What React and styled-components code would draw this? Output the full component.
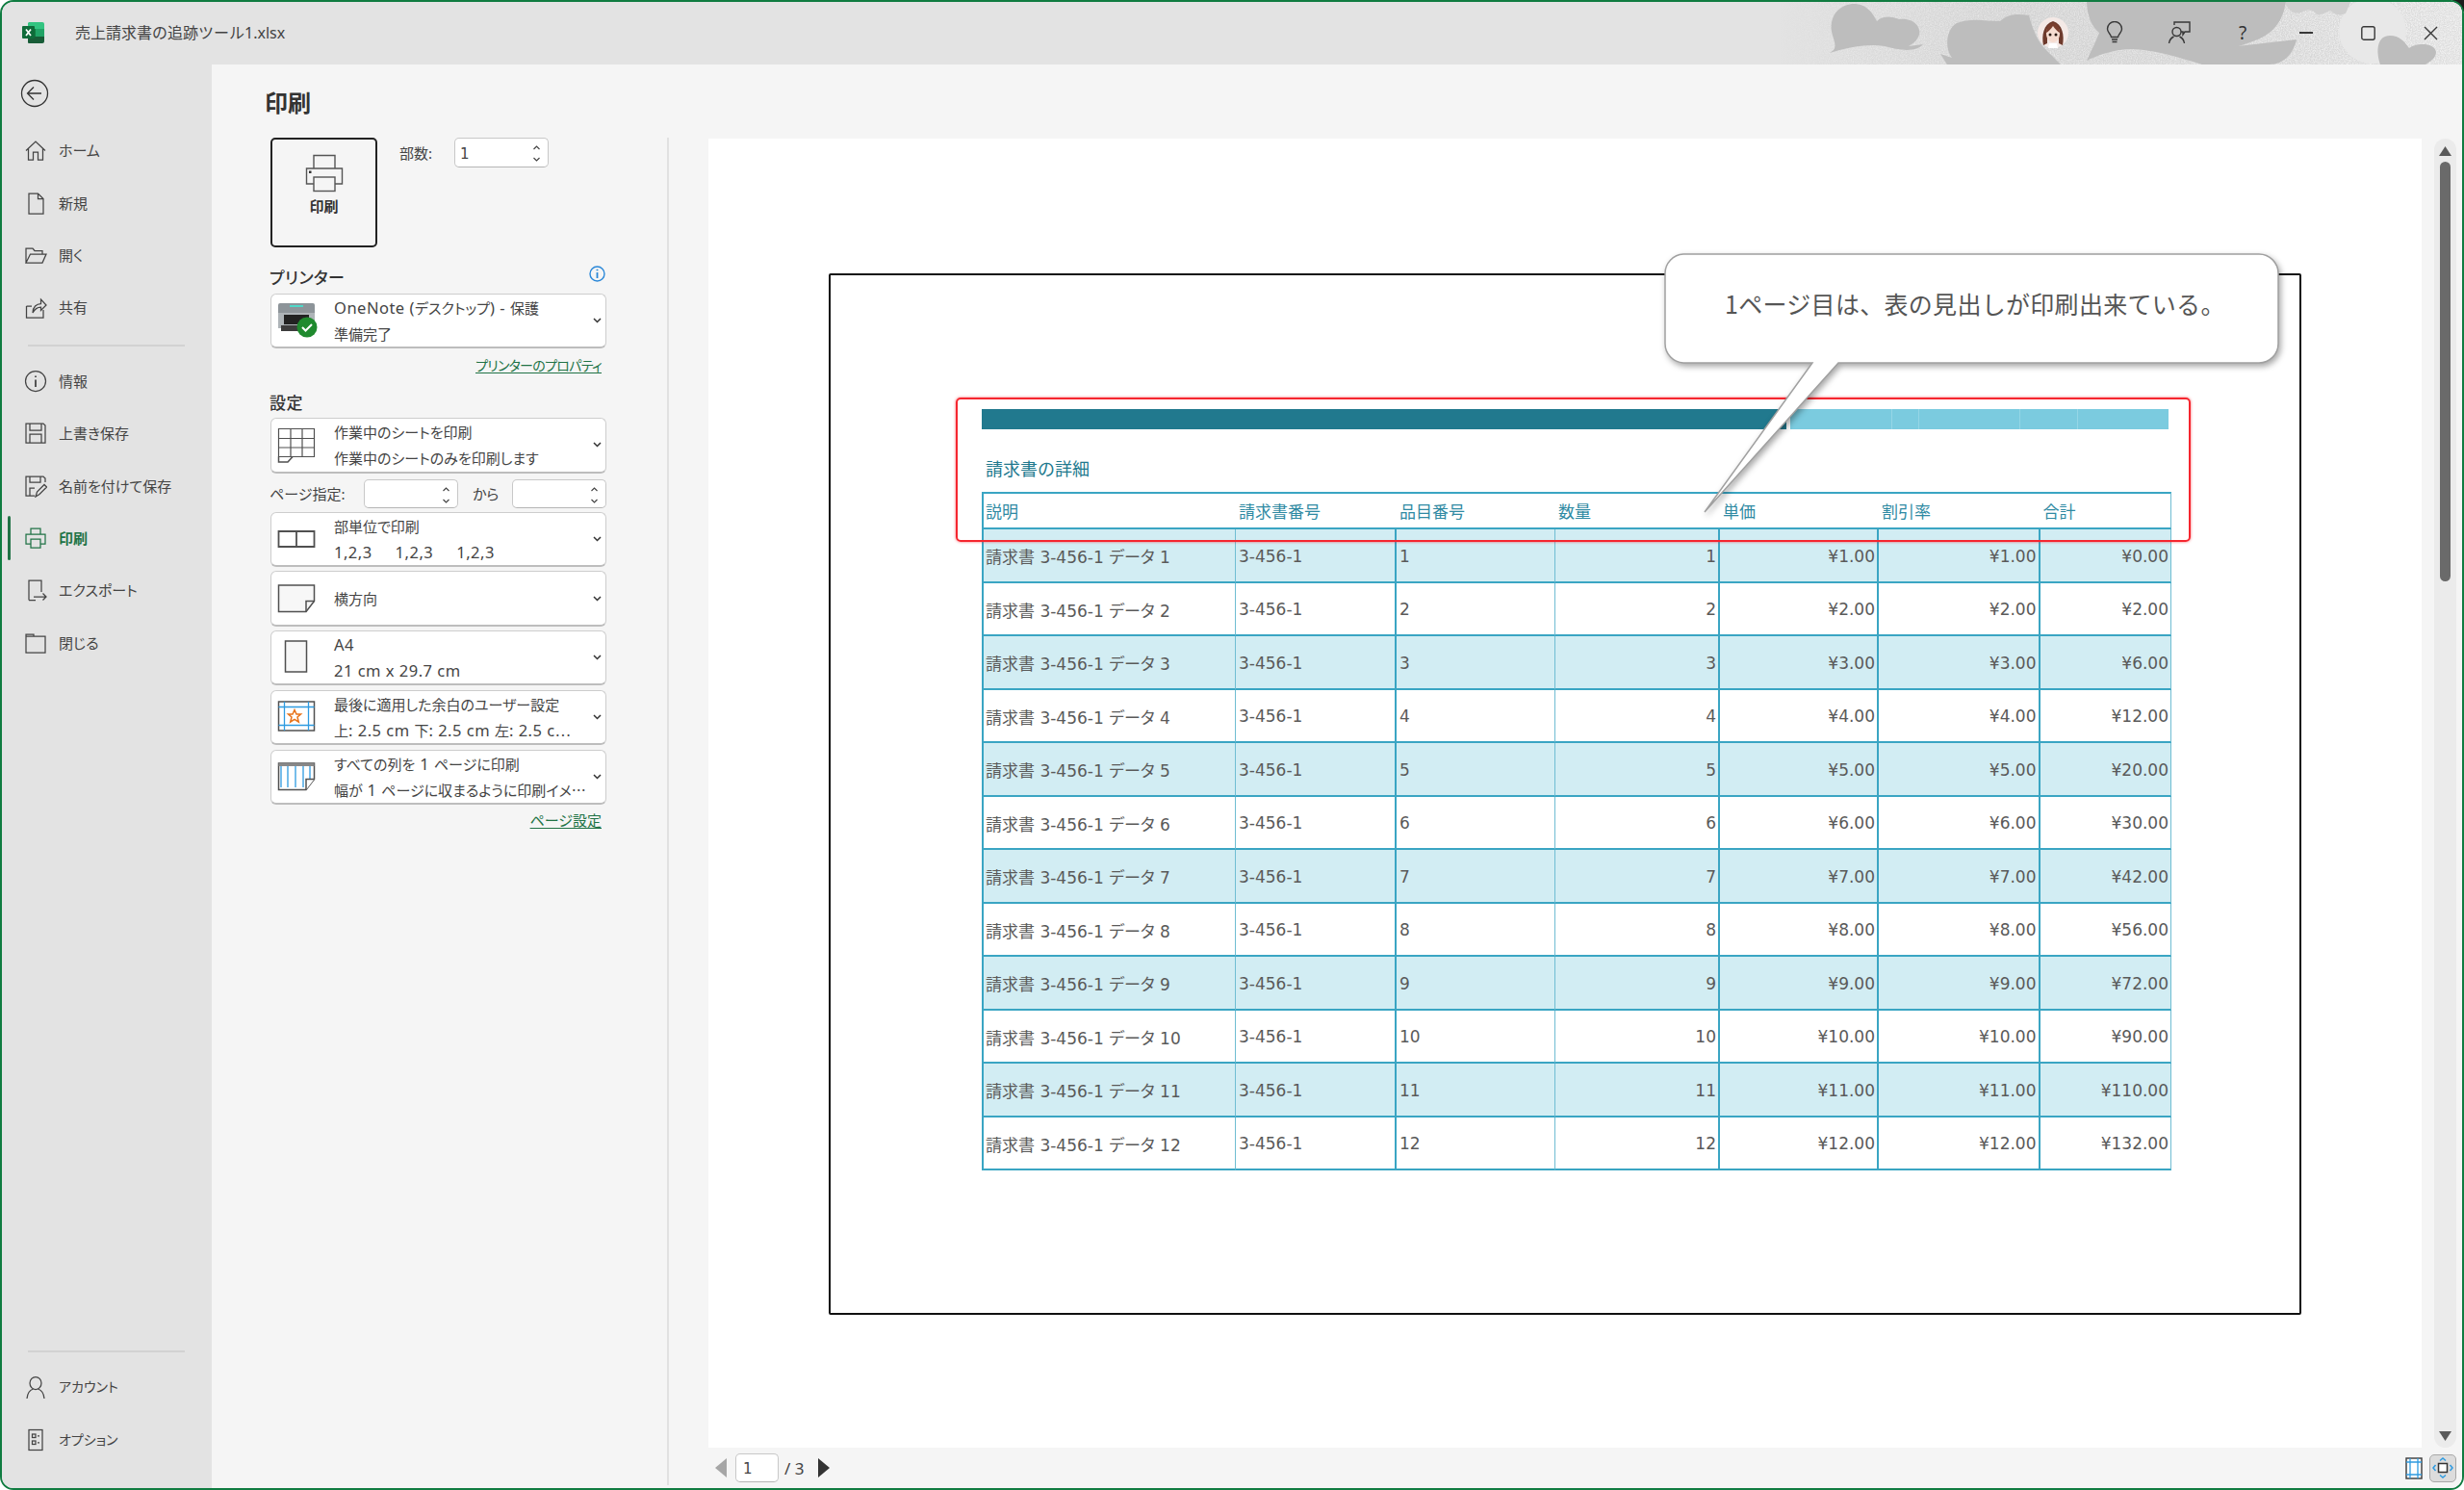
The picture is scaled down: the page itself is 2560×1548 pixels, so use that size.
import React from "react";
import styled, { createGlobalStyle } from "styled-components";

const Global = createGlobalStyle`
  html, body { margin: 0; padding: 0; background: #fff; }
  body { width: 2560px; height: 1548px; overflow: hidden; font-family: "Noto Sans", "Noto Sans CJK JP", sans-serif; }
  * { box-sizing: border-box; }
`;

const Screen = styled.div`
  position: relative; width: 2560px; height: 1548px;
  &::before { content: ""; position: absolute; top: 0; right: 0; width: 12px; height: 12px; background: #1c1c1c; }
`;
const Window = styled.div`
  position: relative; width: 100%; height: 100%; display: flex; flex-direction: column;
  border: 2px solid #107c41; border-radius: 14px; overflow: hidden; background: #f5f5f5;
  font-feature-settings: "palt"; color: #444;
`;
const TitleBar = styled.header`
  position: relative; flex: 0 0 65px; display: flex; align-items: center; background: #e3e3e3;
`;
const TitleArt = styled.svg`
  position: absolute; right: 0; top: 0; width: 708px; height: 65px;
`;
const ExcelLogo = styled.svg`
  position: relative; width: 24px; height: 24px; margin-left: 21px; margin-top: -2px; flex: none;
`;
const FileName = styled.div`
  position: relative; margin-left: 31px; margin-top: -2px; font-size: 16px; line-height: 24px; color: #444; font-feature-settings: normal;
`;
const TitleTools = styled.div`
  position: relative; margin-left: auto; margin-top: -1px; height: 34px; display: flex; align-items: center;
`;
const ToolSlot = styled.div`
  width: ${(p) => p.$w}px; display: flex; align-items: center; justify-content: center; color: #333; font-size: 19px; line-height: 24px;
`;
const ToolIcon = styled.svg`
  display: block; fill: none; stroke: #383838; stroke-width: 1.4;
`;
const AvatarIcon = styled.svg`
  display: block; width: 32px; height: 32px;
`;

const Body = styled.div`
  flex: 1; min-height: 0; display: flex;
`;
const Sidebar = styled.nav`
  flex: 0 0 218px; display: flex; flex-direction: column; background: #e3e3e3; padding-bottom: 23px;
`;
const BackButton = styled.svg`
  width: 30px; height: 30px; margin: 15px 0 17px 19px; flex: none; fill: none; stroke: #333; stroke-width: 1.3;
`;
const NavGroup = styled.div`
  display: flex; flex-direction: column;
`;
const NavItem = styled.div`
  position: relative; height: 54.4px; display: flex; align-items: center; gap: 12px; padding-left: 23px;
  font-size: 15px; color: ${(p) => (p.$active ? "#217346" : "#444")}; font-weight: ${(p) => (p.$active ? 700 : 400)};
  ${(p) => p.$active && `&::before { content: ""; position: absolute; left: 6px; top: 4px; width: 3px; height: 46px; border-radius: 2px; background: #217346; }`}
`;
const NavIcon = styled.svg`
  width: 24px; height: 24px; flex: none; fill: none; stroke: currentColor; stroke-width: 1.25;
`;
const NavLabel = styled.span`
  line-height: 22px;
`;
const NavSmallLabel = styled.span`
  font-size: 14px; line-height: 22px;
`;
const NavRule = styled.div`
  height: 2px; margin: 11px 28px 9px 27px; background: #d2d2d2;
`;
const NavFoot = styled.div`
  margin-top: auto; display: flex; flex-direction: column;
`;

const Main = styled.main`
  flex: 1; min-width: 0; display: flex; flex-direction: column; background: #f5f5f5;
`;
const Heading = styled.h1`
  margin: 0; flex: 0 0 76px; padding: 20px 0 0 55px; font-size: 24px; line-height: 40px; font-weight: 700; color: #333;
`;
const Columns = styled.div`
  flex: 1; min-height: 0; display: flex;
`;
const Settings = styled.section`
  flex: 0 0 475px; margin-bottom: 3px; padding-left: 60px; border-right: 2px solid #e1e1e1;
`;
const PrintRow = styled.div`
  display: flex; align-items: flex-start; margin-left: 1px;
`;
const PrintButton = styled.div`
  width: 111px; height: 114px; flex: none; border: 2px solid #222; border-radius: 5px; display: flex; flex-direction: column; align-items: center; padding-top: 15px;
  font-size: 15px; font-weight: 700; color: #333; line-height: 22px;
`;
const PrinterGlyph = styled.svg`
  width: 40px; height: 40px; margin-bottom: 3px; fill: none; stroke: #555; stroke-width: 1.4;
`;
const CopiesLabel = styled.div`
  margin-left: 23px; width: 57px; flex: none; font-size: 15px; line-height: 32px; color: #444;
`;
const SpinBox = styled.div`
  position: relative; flex: none; width: ${(p) => p.$w}px; height: ${(p) => p.$h || 31}px; background: #fff; border: 1px solid #c8c8c8; border-bottom-color: #b5b5b5; border-radius: 5px;
  display: flex; align-items: center; padding: 2px 0 0 5px; font-size: 15px; color: #444; font-family: "DejaVu Sans", sans-serif;
`;
const SpinArrows = styled.svg`
  position: absolute; right: 7px; top: 7px; width: 9px; height: 17px; fill: none; stroke: #444; stroke-width: 1.2;
`;
const SectionHead = styled.div`
  width: 349px; height: 24px; margin: ${(p) => p.$mt}px 0 ${(p) => p.$mb}px; display: flex; justify-content: space-between; align-items: center;
  font-size: 17px; font-weight: 500; line-height: 24px; letter-spacing: .4px; color: #333;
`;
const InfoIcon = styled.svg`
  width: 17px; height: 17px; margin-top: -9px; fill: none; stroke: #2b88d8; stroke-width: 1.4;
`;
const LinkRow = styled.div`
  width: 345px; height: 20px; margin-top: ${(p) => p.$mt}px; display: flex; justify-content: flex-end; line-height: 20px;
  font-size: ${(p) => (p.$tight ? 14 : 15)}px; letter-spacing: ${(p) => (p.$tight ? "-.7px" : "0")};
  color: #217346; text-decoration: underline; text-underline-offset: 2px;
`;
const Combo = styled.div`
  width: 349px; height: 57.3px; margin-top: ${(p) => p.$mt ?? 4.5}px; margin-left: 1px; background: #fff; border: 1px solid #cdcdcd; border-bottom: 2px solid #bdbdbd; border-radius: 6px;
  display: flex; align-items: center; padding-left: 6px;
`;
const ComboIcon = styled.svg`
  width: 42px; height: 40px; flex: none; fill: none; stroke: #505050; stroke-width: 1.5;
`;
const ComboText = styled.div`
  width: 263px; margin-left: 17px; font-size: 15px; line-height: 27px; color: #444; flex: none; font-family: "Noto Sans CJK JP", sans-serif;
`;
const ComboLine = styled.div`
  height: 27px; white-space: pre;
`;
const LatinRun = styled.span`
  font-size: 16.5px; letter-spacing: .5px; font-family: "Noto Sans", sans-serif; font-feature-settings: normal;
`;
const Chevron = styled.svg`
  width: 9px; height: 6px; margin-left: 6px; flex: none; fill: none; stroke: #333; stroke-width: 1.5;
`;
const RangeRow = styled.div`
  width: 350px; height: 30px; margin: 6px 0 4px; display: flex; align-items: center; font-size: 15px; color: #444;
`;
const RangeLabel = styled.span`
  width: 98px; flex: none;
`;
const RangeFrom = styled.span`
  width: 56px; flex: none; padding-left: 15px;
`;

const Preview = styled.section`
  flex: 1; min-width: 0; padding: 1px 6px 0 41px; display: flex; flex-direction: column;
`;
const PreviewRow = styled.div`
  flex: 0 0 1360px; display: flex;
`;
const Sheet = styled.div`
  flex: 1; min-width: 0; background: #fff; padding: 140px 0 0 125px;
`;
const Paper = styled.div`
  position: relative; width: 1530px; height: 1082px; border: 2px solid #111; border-radius: 2px; padding: 139px 0 0 157px; background: #fff;
`;
const Band = styled.div`
  width: 1233px; height: 21px; display: flex;
`;
const BandPart = styled.div`
  width: ${(p) => p.$w}px; margin-right: ${(p) => p.$gap || 0}px; background: ${(p) => (p.$dark ? "#21798e" : "#7bcbdf")};
  border-left: ${(p) => (p.$sep ? "1px solid #95d6e6" : "0")};
`;
const SheetTitle = styled.div`
  margin: 29px 0 12px 4px; font-size: 18px; line-height: 24px; color: #21798e; font-feature-settings: normal; height: 24px;
`;
const Table = styled.table`
  width: 1236px; table-layout: fixed; border-collapse: separate; border-spacing: 0; font-family: "DejaVu Sans", "Noto Sans CJK JP", sans-serif; font-size: 17px;
`;
const Col = styled.col`
  width: ${(p) => p.$w}px;
`;
const Th = styled.th`
  height: 39px; padding: 0 0 0 3px; text-align: left; font-weight: 400; color: #2f8aa3; border-top: 2px solid #3aa5c3; border-bottom: 2px solid #3aa5c3;
  font-family: "Noto Sans CJK JP", sans-serif;
  &:first-child { border-left: 2px solid #3aa5c3; padding-left: 2px; }
  &:last-child { border-right: 1px solid #6fbdd2; }
`;
const Tr = styled.tr`
  background: ${(p) => (p.$alt ? "#d2edf3" : "#fff")};
`;
const Td = styled.td`
  height: 55.5px; padding: 2px ${(p) => (p.$right ? 2 : 0)}px 0 ${(p) => (p.$right ? 0 : 3)}px; text-align: ${(p) => (p.$right ? "right" : "left")}; color: #5a5a5a; white-space: nowrap;
  border-bottom: 2px solid #3aa5c3; border-right: ${(p) => p.$line || "2px solid #3aa5c3"};
  &:first-child { border-left: 2px solid #3aa5c3; padding-left: 2px; }
`;
const RedFrame = styled.div`
  position: absolute; left: 130px; top: 127px; width: 1283px; height: 150px; border: 2px solid #f5262f; border-radius: 5px; box-shadow: 0 0 3px rgba(245, 38, 47, .7);
`;
const CalloutShape = styled.svg`
  position: absolute; left: 866px; top: -23px; width: 642px; height: 274px; overflow: visible; filter: drop-shadow(2px 3px 3px rgba(0, 0, 0, .35));
`;
const CalloutText = styled.div`
  position: absolute; left: 929px; top: 11px; font-size: 25px; line-height: 36px; letter-spacing: .3px; color: #555; white-space: nowrap; font-feature-settings: normal; font-family: "Noto Sans CJK JP", sans-serif;
`;

const ScrollTrack = styled.div`
  flex: 0 0 23px; margin-left: 13px; position: relative; background: #ebebeb; border-radius: 12px;
`;
const ScrollArrow = styled.svg`
  position: absolute; left: 5px; ${(p) => (p.$down ? "bottom: 7px;" : "top: 8px;")} width: 13px; height: 10px; fill: #5a5a5a;
`;
const ScrollThumb = styled.div`
  position: absolute; left: 6px; top: 24px; width: 11px; height: 436px; border-radius: 6px; background: #6a6a6a;
`;
const Footer = styled.footer`
  flex: 1; display: flex; align-items: center; padding-left: 7px;
`;
const PageArrow = styled.svg`
  width: 12px; height: 20px; flex: none; fill: ${(p) => (p.$dim ? "#a6a6a6" : "#333")};
`;
const PageInput = styled.div`
  width: 45px; height: 30px; margin: 0 6px 0 9px; background: #fff; border: 1px solid #c8c8c8; border-bottom-color: #b5b5b5; border-radius: 5px; padding-left: 7px; font-size: 15px; line-height: 30px; font-family: "DejaVu Sans", sans-serif; color: #444;
`;
const PageTotal = styled.span`
  width: 35px; font-size: 17px; color: #444;
`;
const FooterTools = styled.div`
  margin-left: auto; display: flex; align-items: center; gap: 7px;
`;
const FitIcon = styled.svg`
  width: 18px; height: 23px; display: block;
`;
const ZoomButton = styled.div`
  width: 28px; height: 29px; border: 1px solid #a8a8a8; border-radius: 5px; background: #dcdcdc; display: flex; align-items: center; justify-content: center;
`;
const ZoomIcon = styled.svg`
  width: 22px; height: 22px; display: block;
`;

const Icons = {
  home: <path d="M2 12.5 12 3l10 9.500M4.500 10.500V22h5v-8h5v8h5V10.500" />,
  file: <path d="M5 2h9.500L20 7.500V23H5zM14.500 2v5.500H20" />,
  open: <path d="M2 20V5h7l2 2.500h8V11M2 20h17l4-9H6.500z" />,
  share: <path d="M2.500 11v12H20v-8M2.500 11H8M9 18c0-6 4-9.500 8.500-9.500V4l5.500 6-5.500 5.500V12c-4 0-6.500 2-8.500 6z" />,
  info: <><circle cx="12" cy="12" r="10.500" /><path d="M12 10.500V18" strokeWidth="1.800" /><path d="M12 6.500v1.600" strokeWidth="1.800" /></>,
  save: <path d="M2 2h18l2 2v18H2zM6 2v7h12V2M6 22v-9h12v9" />,
  saveAs: <><path d="M11 22H2V2h18l2 2v4M6 2v6h11V2M6 22v-8h5" /><path d="M12 23l1.500-5L21 10.500l2.500 2.500L16 20.500z" /></>,
  print: <path d="M7 8V2h10v6M7 18H2V8h20v10h-5M7 13h10v9H7z" />,
  export: <path d="M5 22.500V2h13v12M5 22.500h7M10 19h13M19.500 15.500 23 19l-3.500 3.500" />,
  close: <path d="M2 22V3h8v2h12v17zM2 5h8" />,
  account: <><ellipse cx="12" cy="8" rx="6" ry="6.500" /><path d="M3 24c.5-6 3.500-9 6.500-10M21 24c-.5-6-3.500-9-6.500-10" /></>,
  options: <><rect x="5" y="1.500" width="14" height="21" /><rect x="8.500" y="6" width="3.500" height="3.500" /><rect x="8.500" y="13" width="3.500" height="3.500" /><path d="M14 7.800h2M14 14.800h2" /></>,
};

const nav1 = [["home", "ホーム"], ["file", "新規"], ["open", "開く"], ["share", "共有"]];
const nav2 = [["info", "情報"], ["save", "上書き保存"], ["saveAs", "名前を付けて保存"], ["print", "印刷", true], ["export", "エクスポート"], ["close", "閉じる"]];

const ComboGlyphs = {
  printer: (
    <g stroke="none">
      <rect x="1" y="2" width="38" height="12" rx="2" fill="#8d9499" />
      <rect x="13" y="4" width="14" height="2" fill="#4fd8c8" />
      <rect x="1" y="12" width="38" height="16" fill="#aeb4b8" />
      <rect x="7" y="14" width="26" height="10" fill="#222" />
      <rect x="4" y="25" width="24" height="6" fill="#3c3c3c" />
      <circle cx="31" cy="27" r="10.500" fill="#1f8a2e" />
      <path d="M26 27l3.500 3.500L36 24" fill="none" stroke="#fff" strokeWidth="2" />
    </g>
  ),
  sheet: (
    <>
      <path d="M1.500 3.500h37v29h-37zM1.500 13.500h37M1.500 23h37M14 3.500V32.500M26 3.500V32.500" strokeWidth="1.200" />
      <path d="M1.500 32.500V38H11l5-5.500" strokeWidth="1.500" />
    </>
  ),
  collate: <path d="M1.500 12h37v16h-37zM20 12v16" strokeWidth="1.800" />,
  landscape: (
    <>
      <path d="M1.500 6h37v16.500L30 33.500H1.500z" fill="#f7f7f7" />
      <path d="M38.500 22.500H30v11" />
    </>
  ),
  a4: <rect x="8.500" y="3" width="22" height="32" fill="#f7f7f7" />,
  margins: (
    <>
      <rect x="1.500" y="4" width="37" height="30" fill="#fff" />
      <path d="M1.500 9.500h37M1.500 28.500h37M7.500 4v30M32.500 4v30" stroke="#2f9be0" strokeWidth="1.300" />
      <path d="M18 12.500l2 4.500h4.500l-3.500 3 1.300 5L18 22.300 13.700 25l1.300-5-3.500-3H16z" stroke="#e8731a" strokeWidth="1.500" />
    </>
  ),
  fit: (
    <>
      <path d="M1.500 6h37v16.500L30 33.500H1.500z" fill="#fff" />
      <path d="M1.500 6h37v3H1.500z" fill="#888" stroke="none" />
      <path d="M4 9v22M11 9v22M19 9v22M27 9v22M34 9v13" stroke="#2f9be0" strokeWidth="1.300" />
      <path d="M38.500 22.500H30v11" fill="#fff" />
    </>
  ),
};

const combosA = [
  { g: "sheet", l: ["作業中のシートを印刷", "作業中のシートのみを印刷します"] },
];
const combosB = [
  { g: "collate", l: ["部単位で印刷", "1,2,3     1,2,3     1,2,3"] },
  { g: "landscape", l: ["横方向"] },
  { g: "a4", l: ["A4", "21 cm x 29.7 cm"] },
  { g: "margins", l: ["最後に適用した余白のユーザー設定", "上: 2.5 cm 下: 2.5 cm 左: 2.5 c…"] },
  { g: "fit", l: ["すべての列を 1 ページに印刷", "幅が 1 ページに収まるように印刷イメ…"] },
];

const withLatin = (text) =>
  text.split(/([\u0020-\u007e]+)/).map((part, i) =>
    /[\u0021-\u007e]/.test(part) ? <LatinRun key={i}>{part}</LatinRun> : part
  );

const SettingCombo = ({ g, l, mt }) => (
  <Combo $mt={mt}>
    <ComboIcon viewBox="0 0 42 40">{ComboGlyphs[g]}</ComboIcon>
    <ComboText>
      {l.map((t) => (
        <ComboLine key={t}>{withLatin(t)}</ComboLine>
      ))}
    </ComboText>
    <Chevron viewBox="0 0 9 6"><path d="M1 1l3.500 3.500L8 1" /></Chevron>
  </Combo>
);

const Spin = () => (
  <SpinArrows viewBox="0 0 9 17"><path d="M1.500 4 4.500 1l3 3M1.500 13l3 3 3-3" /></SpinArrows>
);

const colW = [264, 167, 165, 171, 165, 167.500, 136.500];
const heads = ["説明", "請求書番号", "品目番号", "数量", "単価", "割引率", "合計"];
const rows = Array.from({ length: 12 }, (_, i) => i + 1);
const light = "1px solid #6fbdd2";
const money = (n) => `¥${n.toFixed(2)}`;

const TitleBackdrop = () => (
  <TitleArt viewBox="1852 2 708 65" aria-hidden="true">
    <defs>
      <linearGradient id="tb" x1="0" x2="1" y1="0" y2="0">
        <stop offset="0" stopColor="#e3e3e3" />
        <stop offset=".1" stopColor="#dcdcdc" />
        <stop offset=".35" stopColor="#d2d2d2" />
        <stop offset=".75" stopColor="#d6d6d6" />
        <stop offset="1" stopColor="#dedede" />
      </linearGradient>
      <linearGradient id="fade" x1="0" x2="1" y1="0" y2="0">
        <stop offset="0" stopColor="#000" />
        <stop offset=".1" stopColor="#777" />
        <stop offset=".6" stopColor="#aaa" />
        <stop offset="1" stopColor="#fff" />
      </linearGradient>
      <mask id="fm" maskUnits="userSpaceOnUse" x="1850" y="0" width="710" height="70"><rect x="1850" y="0" width="710" height="70" fill="url(#fade)" /></mask>
      <filter id="speck" x="0" y="0" width="100%" height="100%">
        <feTurbulence type="fractalNoise" baseFrequency="0.8" numOctaves="2" seed="4" />
        <feColorMatrix values="0 0 0 0 .93  0 0 0 0 .93  0 0 0 0 .93  1.800 0 0 0 -.55" />
      </filter>
    </defs>
    <rect x="1850" y="0" width="710" height="70" fill="url(#tb)" />
    <rect x="1850" y="0" width="710" height="70" filter="url(#speck)" mask="url(#fm)" />
    <ellipse cx="2467" cy="32" rx="35" ry="34" fill="#e8e8e8" />
    <path d="M2375 0h70l-6 14c-8 3-12 0-16-3-5 2-9 5-14 4-4-6-10-6-16-2-7 2-14-1-18-13z" fill="#cfcfcf" />
    <g fill="#bdbdbd">
      <path d="M1903 55c9-5 5-10 2-22-3-21 13-30 25-29 12 1 18 10 22 18 6-6 16-5 23-2 15-2 23 8 21 16-2 6-6 9-11 12l15-2c-8 9-25 6-40 2-20-3-40 2-57 7z" />
      <path d="M2018 56l12 4c-8-10-6-30 5-36 15-6 30-2 45-2 8-8 20-8 30-6 4 14 8 26 18 36l15 15H2025z" />
      <path d="M2170 0h207c-2 20-12 35-32 42-15 6-25 8-27 7l70-8c-3 14-13 26-28 26h-70c-20-6-50-16-75-16-20 1-35 7-45 12 6-13 10-21 13-29-8-6-13-19-13-34z" />
      <path d="M2475 67c-5-15-3-30 10-30 10 0 15 6 20 13 7-6 27-6 28 4 0 6-6 10-11 13z" />
    </g>
  </TitleArt>
);

export default function App() {
  return (
    <Screen>
      <Global />
      <Window>
        <TitleBar>
          <TitleBackdrop />
          <ExcelLogo viewBox="0 0 24 24">
            <path d="M7 1h14a2 2 0 0 1 2 2v5H6V2z" fill="#33c481" />
            <rect x="6" y="8" width="17" height="8" fill="#21a366" />
            <path d="M6 16h17v5a2 2 0 0 1-2 2H7a1 1 0 0 1-1-1z" fill="#185c37" />
            <rect x="6" y="8" width="8" height="8" fill="#107c41" />
            <rect x="0" y="5" width="13" height="13" rx="1" fill="#0f6b3a" />
            <path d="M4 8.500l5 6.500M9 8.500l-5 6.500" stroke="#fff" strokeWidth="1.700" fill="none" />
          </ExcelLogo>
          <FileName>売上請求書の追跡ツール1.xlsx</FileName>
          <TitleTools>
            <ToolSlot $w={60}>
              <AvatarIcon viewBox="0 0 32 32">
                <circle cx="16" cy="16" r="16" fill="#f4e9e6" />
                <path d="M6 29c-2-10 0-22 10-25 10 3 12 15 10 25l-4-2V14H10v13z" fill="#6e3a2c" />
                <path d="M9 17c0-6 3-9 7-9s7 3 7 9c0 5-3 9-7 9s-7-4-7-9z" fill="#f6dcd0" />
                <path d="M9 16c2-1 5-4 7-7 2 3 5 6 7 7 0-6-3-10-7-10S9 10 9 16z" fill="#7a3f2f" />
                <circle cx="13" cy="18" r="1.500" fill="#2a1a14" />
                <circle cx="19" cy="18" r="1.500" fill="#2a1a14" />
                <path d="M12 27l-1 5h10l-1-5z" fill="#fff" />
              </AvatarIcon>
            </ToolSlot>
            <ToolSlot $w={68}>
              <ToolIcon width="22" height="24" viewBox="0 0 22 24">
                <path d="M7.500 16.500C7 13 3.500 12 3.500 8a7.500 7.500 0 0 1 15 0c0 4-3.500 5-4 8.500z" />
                <path d="M8 19h6M8.500 21.500h5" strokeWidth="1.600" />
              </ToolIcon>
            </ToolSlot>
            <ToolSlot $w={66}>
              <ToolIcon width="24" height="24" viewBox="0 0 24 24">
                <path d="M7 4V1h16v10h-5l-2 3v-3h-2" />
                <circle cx="9.500" cy="11" r="4.500" />
                <path d="M1.500 23c.5-4 3-6 5-7M17.500 23c-.5-4-3-6-5-7" />
              </ToolIcon>
            </ToolSlot>
            <ToolSlot $w={66}>?</ToolSlot>
            <ToolSlot $w={65}>
              <ToolIcon width="14" height="2" viewBox="0 0 14 2"><path d="M0 1h14" strokeWidth="2" /></ToolIcon>
            </ToolSlot>
            <ToolSlot $w={65}>
              <ToolIcon width="15" height="15" viewBox="0 0 15 15"><rect x=".8" y=".8" width="13.400" height="13.400" rx="2" /></ToolIcon>
            </ToolSlot>
            <ToolSlot $w={65}>
              <ToolIcon width="15" height="15" viewBox="0 0 15 15"><path d="M1 1l13 13M14 1 1 14" /></ToolIcon>
            </ToolSlot>
          </TitleTools>
        </TitleBar>
        <Body>
          <Sidebar>
            <BackButton viewBox="0 0 30 30">
              <circle cx="15" cy="15" r="13.500" />
              <path d="M22 15H8M14 8.500 7.500 15l6.500 6.500" />
            </BackButton>
            <NavGroup>
              {nav1.map(([ic, t]) => (
                <NavItem key={t}>
                  <NavIcon viewBox="0 0 24 24">{Icons[ic]}</NavIcon>
                  <NavLabel>{t}</NavLabel>
                </NavItem>
              ))}
            </NavGroup>
            <NavRule />
            <NavGroup>
              {nav2.map(([ic, t, active]) => (
                <NavItem key={t} $active={active}>
                  <NavIcon viewBox="0 0 24 24">{Icons[ic]}</NavIcon>
                  <NavLabel>{t}</NavLabel>
                </NavItem>
              ))}
            </NavGroup>
            <NavFoot>
              <NavRule />
              <NavItem>
                <NavIcon viewBox="0 0 24 24">{Icons.account}</NavIcon>
                <NavSmallLabel>アカウント</NavSmallLabel>
              </NavItem>
              <NavItem>
                <NavIcon viewBox="0 0 24 24">{Icons.options}</NavIcon>
                <NavSmallLabel>オプション</NavSmallLabel>
              </NavItem>
            </NavFoot>
          </Sidebar>
          <Main>
            <Heading>印刷</Heading>
            <Columns>
              <Settings>
                <PrintRow>
                  <PrintButton>
                    <PrinterGlyph viewBox="0 0 40 40">
                      <path d="M9 16V1.500h22V16" />
                      <path d="M9 31H1.500V15h37v16H31" fill="#f5f5f5" />
                      <rect x="9" y="24" width="22" height="14.500" fill="#f5f5f5" />
                      <rect x="4" y="17.500" width="2.500" height="2.500" fill="#333" stroke="none" />
                    </PrinterGlyph>
                    印刷
                  </PrintButton>
                  <CopiesLabel>部数:</CopiesLabel>
                  <SpinBox $w={98}>1<Spin /></SpinBox>
                </PrintRow>
                <SectionHead $mt={20} $mb={4}>
                  プリンター
                  <InfoIcon viewBox="0 0 17 17">
                    <circle cx="8.500" cy="8.500" r="7.500" />
                    <path d="M8.500 7v6M8.500 3.800v1.500" strokeWidth="1.800" />
                  </InfoIcon>
                </SectionHead>
                <SettingCombo g="printer" l={["OneNote (デスクトップ) - 保護", "準備完了"]} mt={0} />
                <LinkRow $mt={8} $tight>プリンターのプロパティ</LinkRow>
                <SectionHead $mt={17} $mb={3}>設定</SectionHead>
                {combosA.map((c) => (
                  <SettingCombo key={c.g} {...c} mt={0} />
                ))}
                <RangeRow>
                  <RangeLabel>ページ指定:</RangeLabel>
                  <SpinBox $w={98} $h={30}><Spin /></SpinBox>
                  <RangeFrom>から</RangeFrom>
                  <SpinBox $w={98} $h={30}><Spin /></SpinBox>
                </RangeRow>
                {combosB.map((c, i) => (
                  <SettingCombo key={c.g} {...c} mt={i === 0 ? 0 : 4.5} />
                ))}
                <LinkRow $mt={6}>ページ設定</LinkRow>
              </Settings>
              <Preview>
                <PreviewRow>
                  <Sheet>
                    <Paper>
                      <Band>
                        <BandPart $dark $w={836} $gap={4} />
                        <BandPart $w={105} />
                        <BandPart $w={28} $sep />
                        <BandPart $w={105} $sep />
                        <BandPart $w={60} $sep />
                        <BandPart $w={95} $sep />
                      </Band>
                      <SheetTitle>請求書の詳細</SheetTitle>
                      <Table>
                        <colgroup>
                          {colW.map((w, i) => (
                            <Col key={i} $w={w} />
                          ))}
                        </colgroup>
                        <thead>
                          <tr>
                            {heads.map((h) => (
                              <Th key={h}>{h}</Th>
                            ))}
                          </tr>
                        </thead>
                        <tbody>
                          {rows.map((n) => (
                            <Tr key={n} $alt={n % 2 === 1}>
                              <Td $line={light}>請求書 3-456-1 データ {n}</Td>
                              <Td>3-456-1</Td>
                              <Td $line={light}>{n}</Td>
                              <Td $right>{n}</Td>
                              <Td $right>{money(n)}</Td>
                              <Td $right>{money(n)}</Td>
                              <Td $right $line={light}>{money(n * (n - 1))}</Td>
                            </Tr>
                          ))}
                        </tbody>
                      </Table>
                      <RedFrame />
                      <CalloutShape viewBox="0 0 642 274">
                        <path
                          d="M20 1H618a20 20 0 0 1 20 20V94a20 20 0 0 1-20 20H181L42 269 154 114H20A20 20 0 0 1 1 94V21A20 20 0 0 1 20 1Z"
                          fill="#fff"
                          stroke="#a0a0a0"
                          strokeWidth="1.500"
                        />
                      </CalloutShape>
                      <CalloutText>1ページ目は、表の見出しが印刷出来ている。</CalloutText>
                    </Paper>
                  </Sheet>
                  <ScrollTrack>
                    <ScrollArrow viewBox="0 0 13 10"><path d="M6.500 0 13 10H0z" /></ScrollArrow>
                    <ScrollThumb />
                    <ScrollArrow $down viewBox="0 0 13 10"><path d="M0 0h13L6.500 10z" /></ScrollArrow>
                  </ScrollTrack>
                </PreviewRow>
                <Footer>
                  <PageArrow $dim viewBox="0 0 12 20"><path d="M12 0v20L0 10z" /></PageArrow>
                  <PageInput>1</PageInput>
                  <PageTotal>/ 3</PageTotal>
                  <PageArrow viewBox="0 0 12 20"><path d="M0 0v20l12-10z" /></PageArrow>
                  <FooterTools>
                    <FitIcon viewBox="0 0 18 23">
                      <rect x="1" y="1" width="16" height="21" fill="#fff" stroke="#444" strokeWidth="1.500" />
                      <path d="M5 1v21M13 1v21M1 5h16M1 18h16" stroke="#2f9be0" strokeWidth="1.300" fill="none" />
                    </FitIcon>
                    <ZoomButton>
                      <ZoomIcon viewBox="0 0 22 22">
                        <rect x="6.500" y="6.500" width="9" height="9" fill="#fff" stroke="#333" strokeWidth="1.500" />
                        <path d="M8 3.500 11 1l3 2.500M8 18.500l3 2.500 3-2.500M3.500 8 1 11l2.500 3M18.500 8l2.500 3-2.500 3" fill="none" stroke="#2f9be0" strokeWidth="1.500" />
                      </ZoomIcon>
                    </ZoomButton>
                  </FooterTools>
                </Footer>
              </Preview>
            </Columns>
          </Main>
        </Body>
      </Window>
    </Screen>
  );
}
